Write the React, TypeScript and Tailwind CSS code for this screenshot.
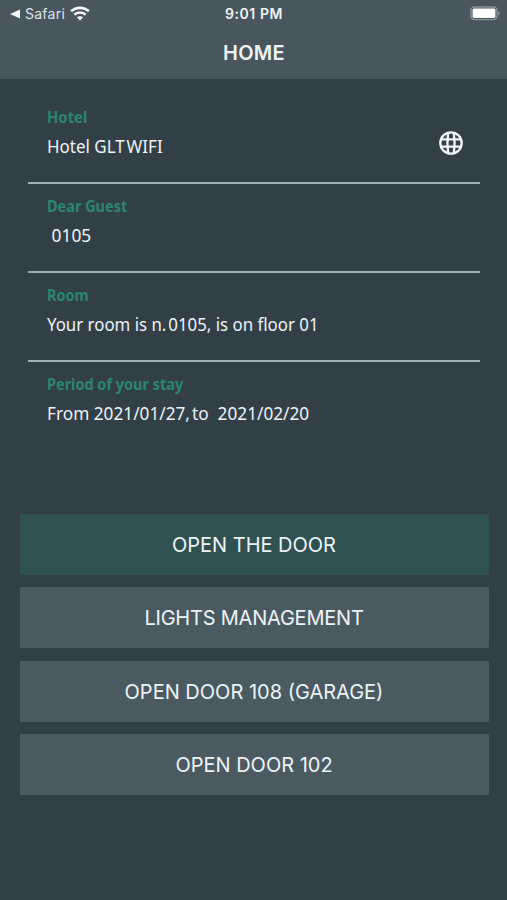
import type { ReactNode } from 'react';

type Detail = { label: string; value: ReactNode; labelFit: string; valueFit: string; globe?: boolean };

// A word space pulled in behind punctuation.
const Tight = () => <span className="tracking-[-2.6px]"> </span>;

const details: Detail[] = [
  { label: 'Hotel', value: <>Hotel GLT<Tight />WIFI</>, labelFit: 'scale-x-[0.9]', valueFit: 'scale-x-[0.942]', globe: true },
  { label: 'Dear Guest', value: ' 0105', labelFit: 'scale-x-[0.877]', valueFit: 'scale-x-[0.965]' },
  { label: 'Room', value: <>Your room is n.<Tight />0105, is on floor 01</>, labelFit: 'scale-x-[0.877]', valueFit: 'scale-x-[0.935]' },
  { label: 'Period of your stay', value: <>From 2021/01/27,<Tight />to  2021/02/20</>, labelFit: 'scale-x-[0.877]', valueFit: 'scale-x-[0.957]' },
];

const actions = [
  { text: 'OPEN THE DOOR', color: 'bg-[#305152]', fit: 'tracking-[-0.02px]' },
  { text: 'LIGHTS MANAGEMENT', color: 'bg-[#4b5a61]', fit: 'tracking-[-0.22px]' },
  { text: 'OPEN DOOR 108 (GARAGE)', color: 'bg-[#4b5a61]', fit: '' },
  { text: 'OPEN DOOR 102', color: 'bg-[#4b5a61]', fit: '' },
];

function Wifi() {
  return (
    <svg width="20" height="15" viewBox="0 0 20 15" fill="none" stroke="#f4f8fa" strokeWidth="2.6">
      <path d="M1.2 5.3C6 .7 14 .7 18.8 5.3" />
      <path d="M4.3 8.7C7.5 5.8 12.5 5.8 15.7 8.7" />
      <path d="M10 14.4 6.9 11.3C8.7 9.8 11.3 9.8 13.1 11.3Z" fill="#f4f8fa" stroke="none" />
    </svg>
  );
}

function Battery() {
  return (
    <svg width="31" height="15" viewBox="0 0 31 15">
      <rect x="1" y="1" width="26" height="12.6" rx="3.5" fill="none" stroke="#89949a" strokeWidth="1.4" />
      <rect x="2.6" y="2.6" width="22.8" height="9.4" rx="1.6" fill="#fff" />
      <path d="M28.3 5.1c2.2.8 2.2 3.6 0 4.4z" fill="#89949a" />
    </svg>
  );
}

function Globe() {
  return (
    <svg width="26" height="26" viewBox="0 0 26 26" fill="none" stroke="#f2f7fa" strokeWidth="2.3">
      <circle cx="13" cy="13" r="10.7" />
      <path d="M3 9.4h20M3 16.6h20M10.2 2.5C9.2 9 9.2 17 10.2 23.5M15.8 2.5C16.8 9 16.8 17 15.8 23.5" />
    </svg>
  );
}

export default function App() {
  return (
    <main className="flex h-[900px] w-[507px] flex-col overflow-hidden bg-[#333f47] font-['Inter',sans-serif] text-[#edf4f7]">
      <header className="h-[79px] shrink-0 bg-[#4a565d]">
        <div className="grid h-[27px] grid-cols-3 items-center pl-[10px] pr-[6px] text-[14px]">
          <div className="flex items-center">
            <svg width="10" height="10" viewBox="0 0 10 10" fill="#f4f8fa"><path d="M0 5 10 .5v9z" /></svg>
            <span className="ml-[5px] mr-[5px] tracking-[0.25px] text-[#dce3e7]">Safari</span>
            <Wifi />
          </div>
          <div className="pr-[3px] text-center font-semibold tracking-[0.55px]">9:01 PM</div>
          <div className="flex justify-end"><Battery /></div>
        </div>
        <h1 className="pl-px pt-[11.5px] text-center text-[20px] font-semibold leading-7 tracking-[0.25px]">HOME</h1>
      </header>
      <section className="flex flex-col pl-7 pr-[27px] pt-4 font-['Noto_Sans','Open_Sans',sans-serif]">
        {details.map((item) => (
          <div key={item.label} className="flex h-[89px] justify-between border-b-2 border-[#a0adb4] pl-[19px] pr-4 pt-[9.5px] last:border-transparent">
            <div>
              <div className="h-[29px] whitespace-nowrap text-[#2a8573]">
                <span className={`inline-block origin-left text-[16.5px] font-bold leading-6 ${item.labelFit}`}>{item.label}</span>
              </div>
              <div className="whitespace-pre">
                <span className={`inline-block origin-left text-[18px] leading-6 ${item.valueFit}`}>{item.value}</span>
              </div>
            </div>
            {item.globe && <div className="pt-[25px]"><Globe /></div>}
          </div>
        ))}
      </section>
      <nav className="mt-[63.2px] flex flex-col gap-[12.3px] pl-[19.5px] pr-[18.5px]">
        {actions.map((action) => (
          <button key={action.text} className={`flex h-[61px] items-center justify-center rounded-[1px] pt-[1px] text-[20px] ${action.color}`}>
            <span className={action.fit}>{action.text}</span>
          </button>
        ))}
      </nav>
    </main>
  );
}
